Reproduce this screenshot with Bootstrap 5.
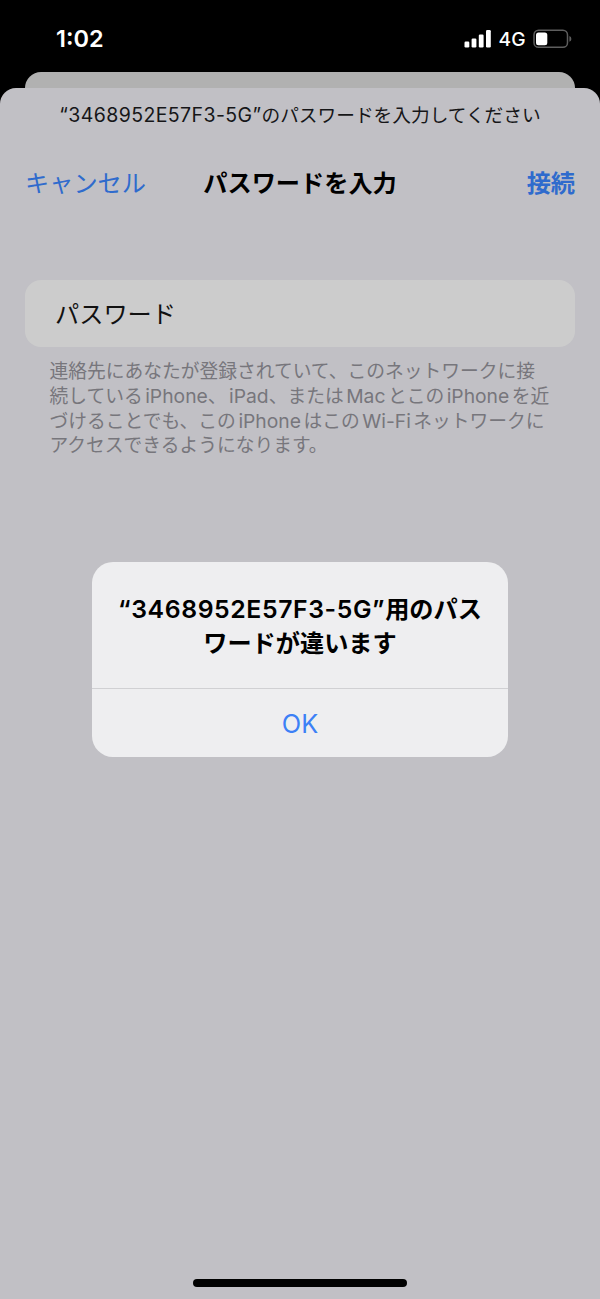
<!DOCTYPE html>
<html lang="ja">
<head>
<meta charset="utf-8">
<meta name="viewport" content="width=device-width, initial-scale=1">
<title>パスワードを入力</title>
<link href="https://cdn.jsdelivr.net/npm/bootstrap@5.3.0/dist/css/bootstrap.min.css" rel="stylesheet">
<style>
html,body{height:100%}
body{background:#000;color:#000;font-family:Inter,"Noto Sans CJK JP",sans-serif;font-size:24.2px;line-height:30px;overflow:hidden}
.phone{width:600px;height:1299px}
.statusbar{height:72px;padding:5px 28px 0 56px;color:#fff}
.clock{font-size:23.5px;font-weight:600}
.signal{font-size:19.2px;font-weight:500;margin:0 7.5px 0 6.5px}
.sheet-back{height:16px;margin:0 25px;background:#b1b1b1;border-radius:16px 16px 0 0}
.sheet{background:#c1c0c5;border-radius:16px 16px 0 0;padding:0 25px}
.latin{line-height:1}
.prompt-line{font-size:18.7px;line-height:26px;margin-top:15px;color:#161618}
.prompt-line .latin{font-size:19.5px;letter-spacing:.4px}
.sheet-nav{height:40px;margin-top:35px}
.tint{color:#2f6bcd}
.heavy{font-weight:600}
.field-card{height:67px;margin-top:76px;background:#ccc;border-radius:16px;padding:2px 30px 0;color:#111}
.footnote{font-size:18.75px;line-height:24.8px;margin:13px 0 0 24.5px;color:#77767c}
.footnote .latin{font-size:19.3px;margin:0 2.5px}
.footnote .latin.tight{margin-right:0}
.alert-box{left:92px;top:562px;width:416px;height:195px;border-radius:21px;background:#eeeef0}
.alert-head{height:127px;padding-top:31px;line-height:34px;border-bottom:1.5px solid #d0d0d3;font-weight:600}
.alert-head .latin{font-size:24.8px;letter-spacing:.6px}
.ok{color:#3c80f6;font-size:25.3px;padding-top:1px}
.home-bar{width:214px;height:8px;border-radius:4px;background:#000;margin-bottom:12px}
</style>
<script src="https://cdn.jsdelivr.net/npm/bootstrap@5.3.0/dist/js/bootstrap.bundle.min.js"></script>
</head>
<body>
<div class="phone position-relative d-flex flex-column">
  <header class="statusbar d-flex justify-content-between align-items-center">
    <span class="clock">1:02</span>
    <div class="d-flex align-items-center">
      <svg width="28" height="20" viewBox="0 0 28 20" fill="#fff"><rect x="0.5" y="12.5" width="4.8" height="6" rx="1.2"/><rect x="7.6" y="9.5" width="4.8" height="9" rx="1.2"/><rect x="14.8" y="5.5" width="4.8" height="13" rx="1.2"/><rect x="22" y="1" width="4.8" height="17.5" rx="1.2"/></svg>
      <span class="signal">4G</span>
      <svg width="39" height="20" viewBox="0 0 39 20"><rect x="1" y="1.3" width="33.5" height="17" rx="4.6" fill="none" stroke="#5e5e5e" stroke-width="1.5"/><rect x="3" y="3.5" width="11.3" height="12.8" rx="2.5" fill="#fff"/><path d="M36.4 7v5.8q2-.8 2-2.9t-2-2.9z" fill="#5e5e5e"/></svg>
    </div>
  </header>
  <div class="sheet-back"></div>
  <main class="sheet flex-grow-1 d-flex flex-column">
    <div class="prompt-line text-center text-nowrap"><span class="latin">“3468952E57F3-5G”</span>のパスワードを入力してください</div>
    <nav class="sheet-nav d-flex justify-content-between align-items-center">
      <span class="tint col">キャンセル</span>
      <span class="heavy">パスワードを入力</span>
      <span class="tint heavy col text-end">接続</span>
    </nav>
    <div class="field-card d-flex align-items-center">パスワード</div>
    <p class="footnote text-nowrap">連絡先にあなたが登録されていて、このネットワークに接<br>続している<span class="latin tight">iPhone</span>、<span class="latin tight">iPad</span>、または<span class="latin">Mac</span>とこの<span class="latin">iPhone</span>を近<br>づけることでも、この<span class="latin">iPhone</span>はこの<span class="latin">Wi-Fi</span>ネットワークに<br>アクセスできるようになります。</p>
    <div class="home-bar mt-auto mx-auto"></div>
  </main>
  <div class="alert-box position-absolute d-flex flex-column text-center" role="alertdialog">
    <div class="alert-head text-nowrap"><span class="latin">“3468952E57F3-5G”</span>用のパス<br>ワードが違います</div>
    <div class="ok flex-grow-1 d-flex align-items-center justify-content-center">OK</div>
  </div>
</div>
</body>
</html>
